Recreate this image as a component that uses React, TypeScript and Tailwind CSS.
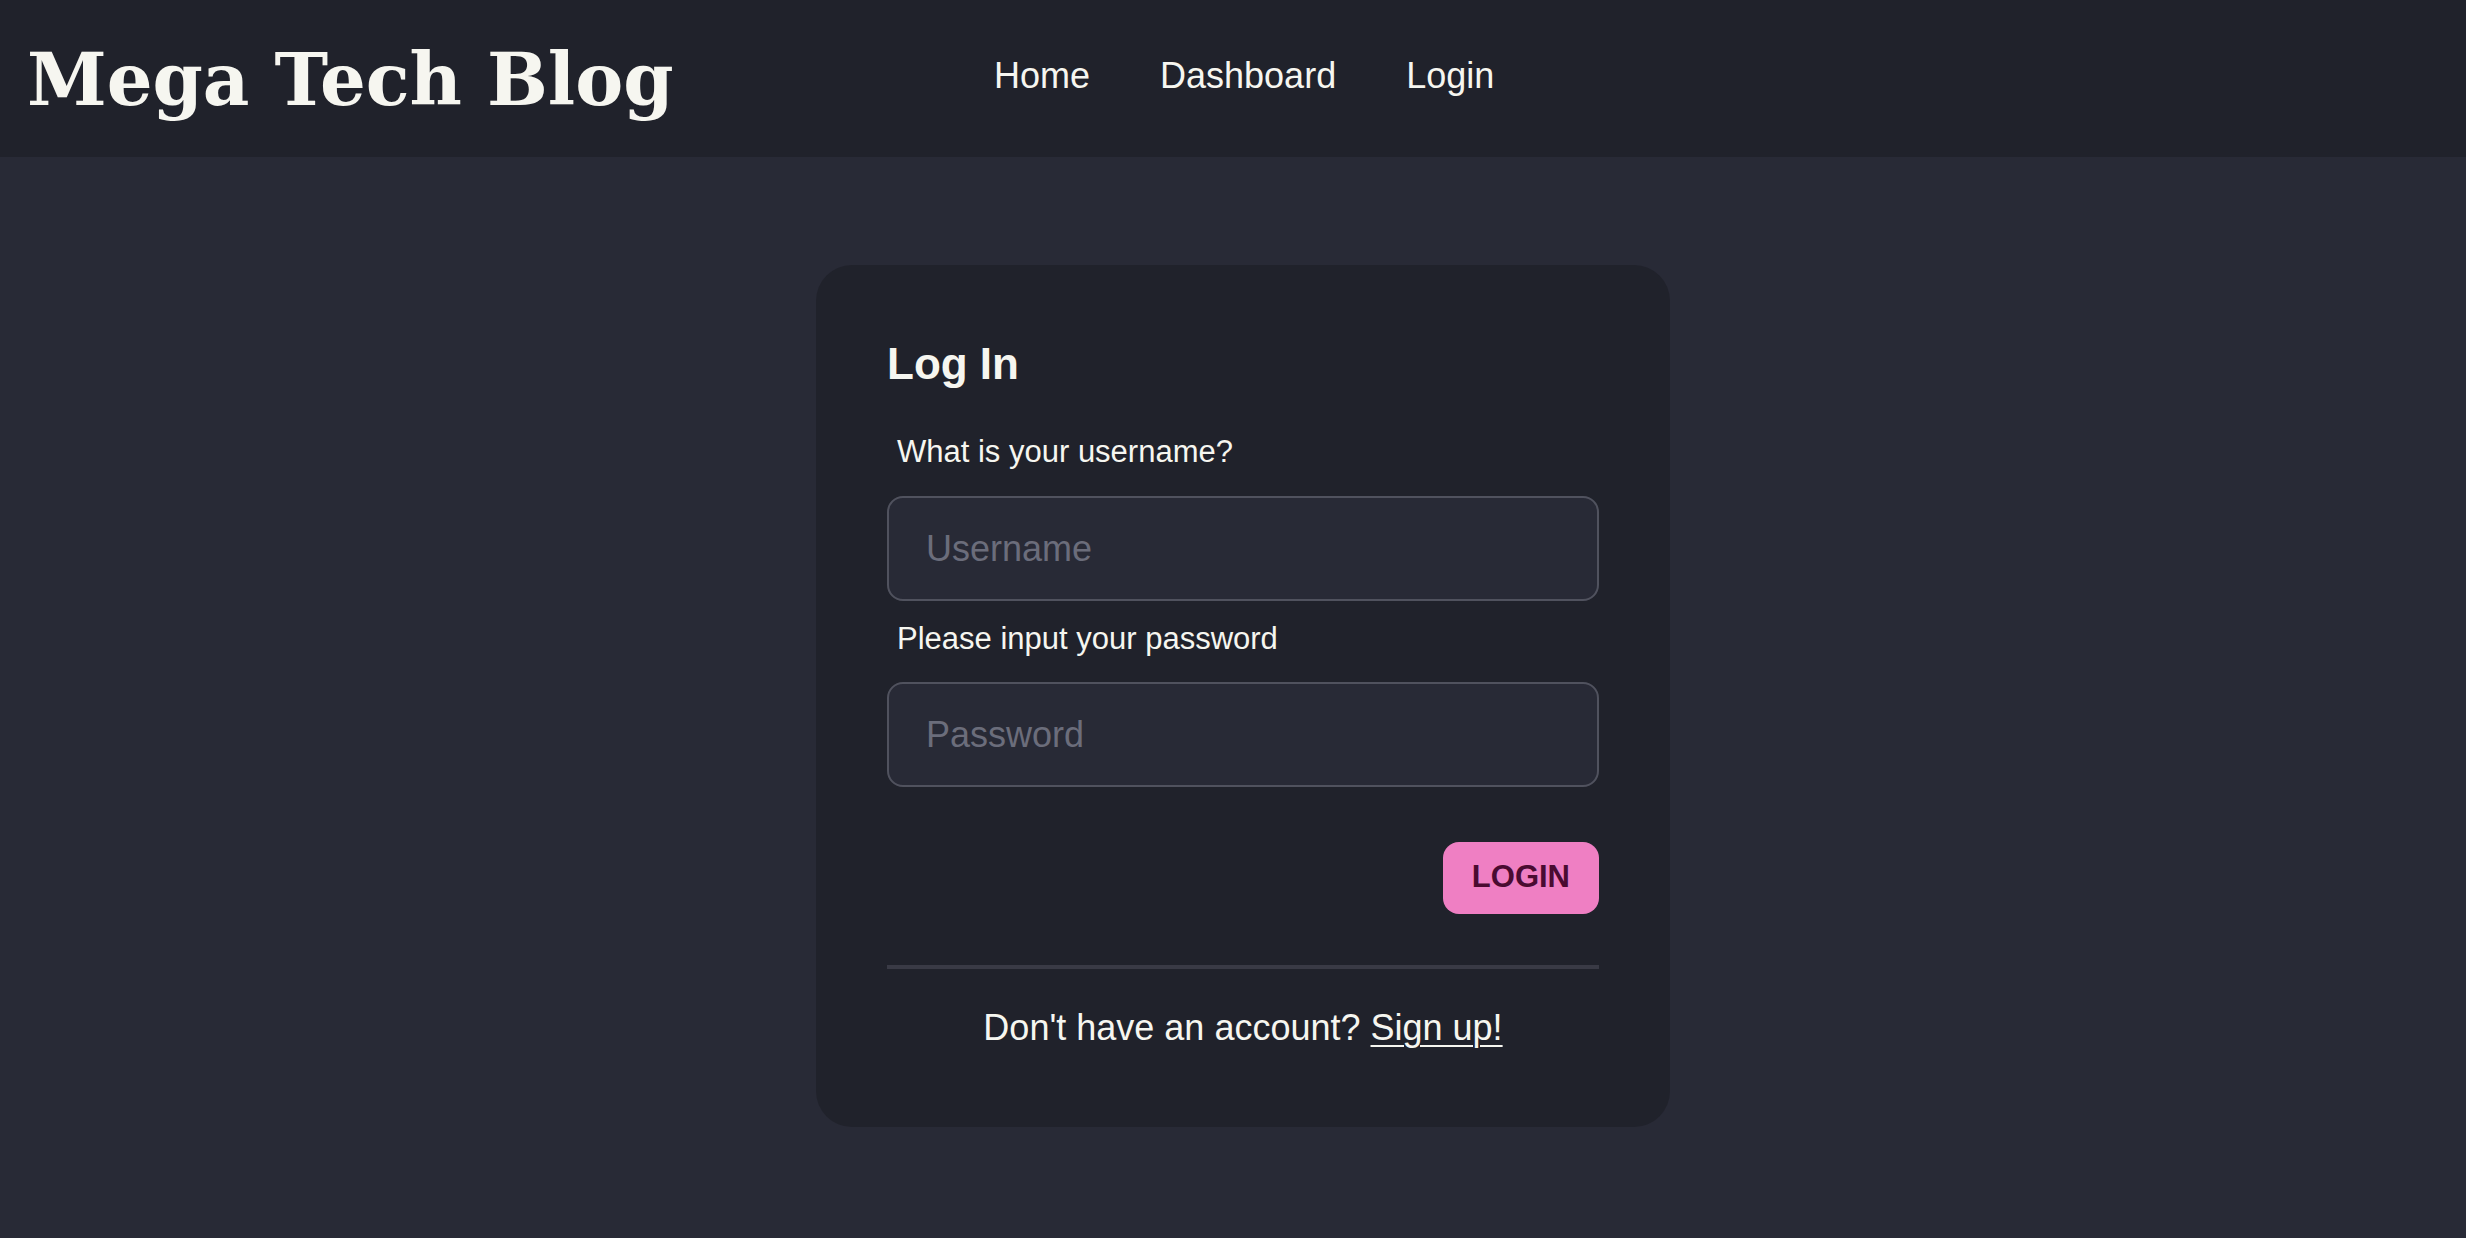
import { useState } from 'react';

const sans = "font-['Liberation_Sans',Arial,sans-serif]";

function Header() {
  return (
    <header className="h-[157px] bg-[#20222b] flex items-center pl-[27px]">
      <h1 className="w-[967px] shrink-0 font-['DejaVu_Serif',serif] font-bold text-[72px] leading-none text-[#f6f6f0] mt-[3px]">
        Mega Tech Blog
      </h1>
      <nav className={`flex items-center gap-[70px] text-[36px] text-[#f6f6f0] -mt-[6px] ${sans}`}>
        <a href="#">Home</a>
        <a href="#">Dashboard</a>
        <a href="#">Login</a>
      </nav>
    </header>
  );
}

function LoginCard() {
  const [username, setUsername] = useState('');
  const [password, setPassword] = useState('');

  return (
    <div className={`w-[854px] bg-[#20222b] rounded-[36px] px-[71px] pt-[73px] pb-[78px] text-[#f6f6f0] ${sans}`}>
      <h2 className="text-[44px] leading-[52px] font-bold">Log In</h2>

      <form className="mt-[44px]" onSubmit={e => e.preventDefault()}>
        <label className="block pl-[10px] text-[31px] leading-[36px] mb-[26px]">What is your username?</label>
        <input
          value={username}
          onChange={e => setUsername(e.target.value)}
          placeholder="Username"
          className="block w-full h-[105px] rounded-[16px] border-2 border-[#50525e] bg-[#282a36] px-[37px] text-[36px] text-[#f6f6f0] placeholder:text-[#6b6d7b] outline-none"
        />

        <label className="block mt-[20px] pl-[10px] text-[31px] leading-[36px] mb-[25px]">Please input your password</label>
        <input
          type="password"
          value={password}
          onChange={e => setPassword(e.target.value)}
          placeholder="Password"
          className="block w-full h-[105px] rounded-[16px] border-2 border-[#50525e] bg-[#282a36] px-[37px] text-[36px] text-[#f6f6f0] placeholder:text-[#6b6d7b] outline-none"
        />

        <div className="flex justify-end mt-[55px]">
          <button
            type="submit"
            className="h-[72px] px-[29px] pb-[3px] rounded-[16px] bg-[#ef7fc3] text-[#4a0b31] text-[31px] font-bold leading-none"
          >
            LOGIN
          </button>
        </div>
      </form>

      <div className="mt-[51px] h-[4px] bg-[#393a45]" />

      <p className="mt-[38px] text-center text-[36px] leading-[42px]">
        Don't have an account?{' '}
        <a href="#" className="underline decoration-2 underline-offset-[5px]">
          Sign up!
        </a>
      </p>
    </div>
  );
}

export default function App() {
  return (
    <div className="min-h-screen bg-[#282a36]">
      <Header />
      <main className="flex justify-center pt-[108px] pl-[20px] pb-[100px]">
        <LoginCard />
      </main>
    </div>
  );
}
